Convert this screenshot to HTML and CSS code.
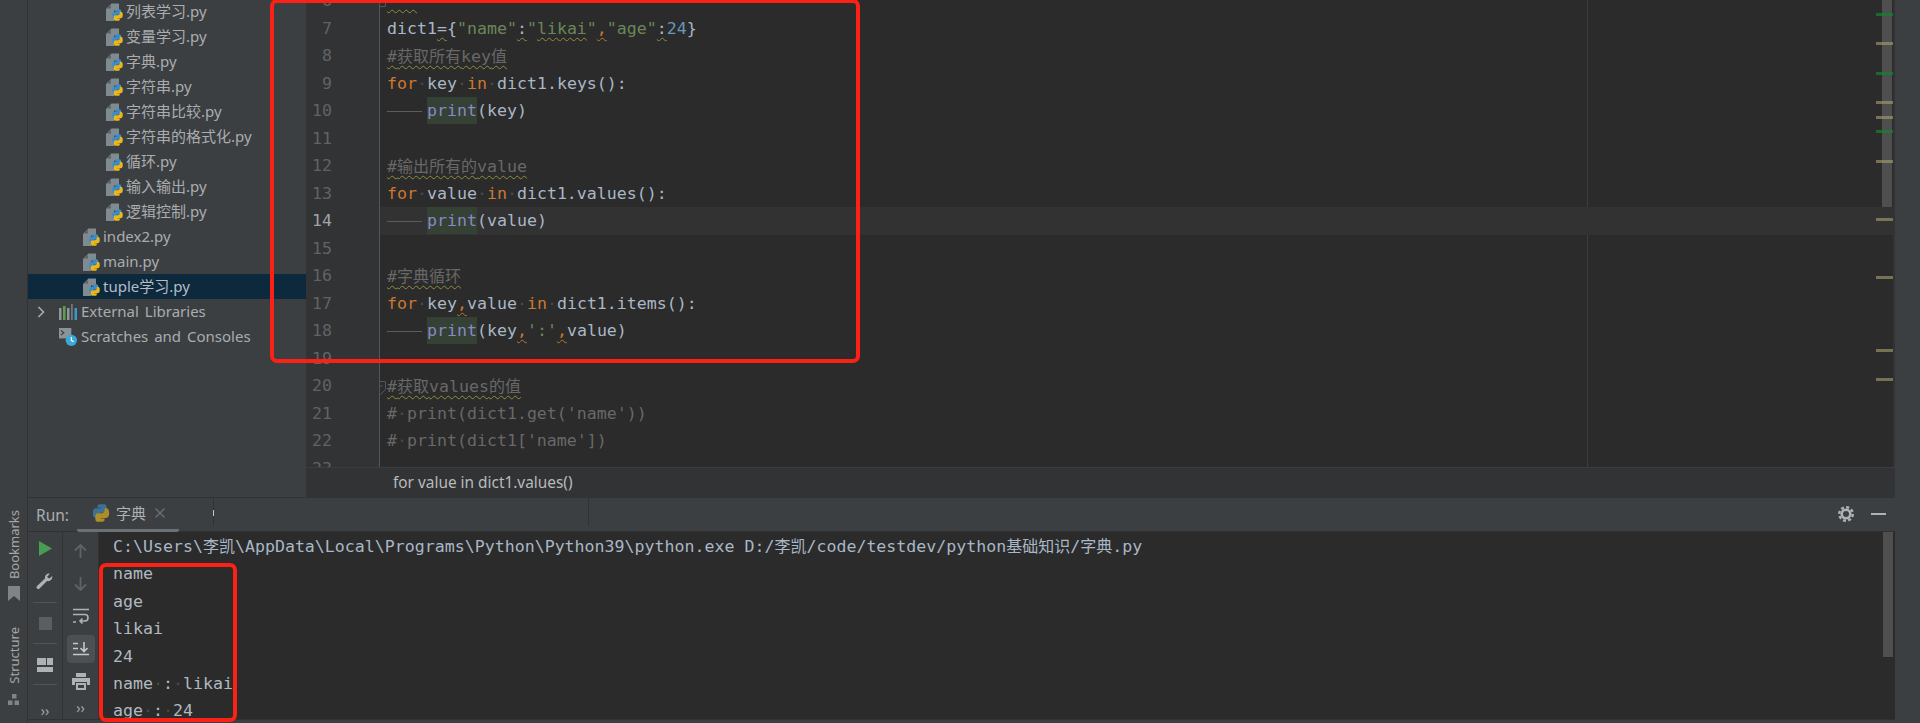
FILE: index.html
```html
<!DOCTYPE html>
<html lang="zh">
<head>
<meta charset="utf-8">
<title>字典.py</title>
<link rel="stylesheet" href="styles.css">
</head>
<body>
<svg class="defs" width="0" height="0" aria-hidden="true">
  <defs>
    <symbol id="py" viewBox="0 0 16 16">
      <path fill="#3c8cc7" d="M7.9 1C5 1 5.2 2.3 5.2 2.3V3.7h2.8v.4H4C2.7 4.1 1.5 4.9 1.5 8c0 3.1 1.1 3.9 2.3 3.9h1.3v-1.6c0-1.4 1.2-2.5 2.6-2.5h2.8c1.1 0 2-.9 2-2V2.9C12.5 1.9 11.6 1 10.4 1z"/>
      <path fill="#eab71c" transform="rotate(180 8 8)" d="M7.9 1C5 1 5.2 2.3 5.2 2.3V3.7h2.8v.4H4C2.7 4.1 1.5 4.9 1.5 8c0 3.1 1.1 3.9 2.3 3.9h1.3v-1.6c0-1.4 1.2-2.5 2.6-2.5h2.8c1.1 0 2-.9 2-2V2.9C12.5 1.9 11.6 1 10.4 1z"/>
    </symbol>
    <symbol id="pyfile" viewBox="0 0 18 18">
      <path fill="#7f8b91" d="M0 6 5.500 .5H13v7H8V18H0z"/>
      <path fill="#3c3f41" d="M4.800 2v3.500H1.300z" opacity=".6"/>
      <use href="#py" x="5" y="5.500" width="13" height="13"/>
    </symbol>
  </defs>
</svg>
<div class="app">
  <aside class="strip">
    <div class="vtext bookmarks">Bookmarks</div>
    <svg class="strip-icon" width="12" height="15" viewBox="0 0 12 15"><path fill="#7e8487" d="M0 0h12v15L6 10 0 15z"/></svg>
    <div class="vtext structure">Structure</div>
    <svg class="strip-icon strip-icon-b" width="12" height="12" viewBox="0 0 12 12"><path fill="#7e8487" d="M4 0h4.500v4.500H4zM0 6.500h4.500V11H0zM6.500 6.500H11V11H6.500z"/></svg>
  </aside>
  <main class="main">
    <section class="upper">
      <nav class="tree">
        <div class="row l3"><svg class="ficon"><use href="#pyfile"/></svg>列表学习.py</div>
        <div class="row l3"><svg class="ficon"><use href="#pyfile"/></svg>变量学习.py</div>
        <div class="row l3"><svg class="ficon"><use href="#pyfile"/></svg>字典.py</div>
        <div class="row l3"><svg class="ficon"><use href="#pyfile"/></svg>字符串.py</div>
        <div class="row l3"><svg class="ficon"><use href="#pyfile"/></svg>字符串比较.py</div>
        <div class="row l3"><svg class="ficon"><use href="#pyfile"/></svg>字符串的格式化.py</div>
        <div class="row l3"><svg class="ficon"><use href="#pyfile"/></svg>循环.py</div>
        <div class="row l3"><svg class="ficon"><use href="#pyfile"/></svg>输入输出.py</div>
        <div class="row l3"><svg class="ficon"><use href="#pyfile"/></svg>逻辑控制.py</div>
        <div class="row l2"><svg class="ficon"><use href="#pyfile"/></svg>index2.py</div>
        <div class="row l2"><svg class="ficon"><use href="#pyfile"/></svg>main.py</div>
        <div class="row l2 selected"><svg class="ficon"><use href="#pyfile"/></svg>tuple学习.py</div>
        <div class="row l1">
          <svg class="chev" width="9" height="12" viewBox="0 0 9 12"><path fill="none" stroke="#a9adb0" stroke-width="1.600" d="M1.500 1l5 5-5 5"/></svg>
          <svg class="ficon lib" viewBox="0 0 18 18"><path fill="#8f979b" d="M0 5h2.500v12H0zM8 5h2.500v12H8z"/><path fill="#5f9e4d" d="M4 3h2.500v14H4z"/><path fill="#6f787c" d="M12 1h1.800v16H12z"/><path fill="#3e97c9" d="M15.500 5H18v12h-2.500z"/></svg>External Libraries
        </div>
        <div class="row l1">
          <svg class="ficon lib" viewBox="0 0 19 19"><path fill="#8b9398" d="M0 0h13v11H0z"/><path fill="none" stroke="#3c3f41" stroke-width="1.300" d="M2 2.500 5 5 2 7.500"/><circle cx="13" cy="13" r="6" fill="#3aa9d8"/><path fill="none" stroke="#fff" stroke-width="1.200" d="M13 9.500V13l2.500 1.500"/></svg>Scratches and Consoles
        </div>
      </nav>
      <section class="editor">
        <div class="editor-view">
          <div class="gutter">
            <div class="ln">6</div><div class="ln">7</div><div class="ln">8</div><div class="ln">9</div><div class="ln">10</div><div class="ln">11</div><div class="ln">12</div><div class="ln">13</div><div class="ln now">14</div><div class="ln">15</div><div class="ln">16</div><div class="ln">17</div><div class="ln">18</div><div class="ln">19</div><div class="ln">20</div><div class="ln">21</div><div class="ln">22</div><div class="ln">23</div>
          </div>
          <div class="code">
            <div class="margin-line"></div>
            <svg class="fold fold-a" width="11" height="7" viewBox="0 0 11 7"><path fill="none" stroke="#55585a" d="M.500 0v6.500h10V0"/></svg>
            <svg class="fold fold-b" width="11" height="15" viewBox="0 0 11 15"><path fill="#2b2b2b" stroke="#55585a" d="M.500.500h10v8l-5 5-5-5z"/><path stroke="#55585a" d="M3 5h5"/></svg>
            <div class="cl"><span class="sq quote-top">'''</span></div>
            <div class="cl">dict1<span class="sq">=</span>{<span class="str">"name"</span><span class="sq">:</span><span class="str">"<span class="sq">likai</span>"</span><span class="sq ko">,</span><span class="str">"age"</span><span class="sq">:</span><span class="num">24</span>}</div>
            <div class="cl"><span class="sq com">#<span class="cjk">获取所有</span>key<span class="cjk">值</span></span></div>
            <div class="cl"><span class="kw">for</span><span class="ws">·</span>key<span class="ws">·</span><span class="kw">in</span><span class="ws">·</span>dict1.keys():</div>
            <div class="cl"><span class="tab"></span><span class="pr">print</span>(key)</div>
            <div class="cl"></div>
            <div class="cl"><span class="sq com">#<span class="cjk">输出所有的</span>value</span></div>
            <div class="cl"><span class="kw">for</span><span class="ws">·</span>value<span class="ws">·</span><span class="kw">in</span><span class="ws">·</span>dict1.values():</div>
            <div class="cl current"><span class="tab"></span><span class="pr">print</span>(value)</div>
            <div class="cl"></div>
            <div class="cl"><span class="sq com">#<span class="cjk">字典循环</span></span></div>
            <div class="cl"><span class="kw">for</span><span class="ws">·</span>key<span class="sq ko">,</span>value<span class="ws">·</span><span class="kw">in</span><span class="ws">·</span>dict1.items():</div>
            <div class="cl"><span class="tab"></span><span class="pr">print</span>(key<span class="sq ko">,</span><span class="str">':'</span><span class="sq ko">,</span>value)</div>
            <div class="cl"></div>
            <div class="cl"><span class="sq com">#<span class="cjk">获取</span>values<span class="cjk">的值</span></span></div>
            <div class="cl com">#<span class="ws">·</span>print(dict1.get('name'))</div>
            <div class="cl com">#<span class="ws">·</span>print(dict1['name'])</div>
            <div class="thumb"></div>
            <i class="mark green" style="top:13px"></i><i class="mark" style="top:42px"></i><i class="mark green" style="top:72px"></i><i class="mark" style="top:101px"></i><i class="mark" style="top:116px"></i><i class="mark green" style="top:130px"></i><i class="mark" style="top:160px"></i><i class="mark" style="top:218px"></i><i class="mark" style="top:276px"></i><i class="mark" style="top:349px"></i><i class="mark" style="top:378px"></i>
          </div>
        </div>
        <div class="crumb">for value in dict1.values()</div>
      </section>
    </section>
    <section class="lower">
      <header class="runbar">
        <span class="runlabel">Run:</span>
        <div class="tab-item">
          <svg class="tab-py" width="20" height="20"><use href="#py"/></svg>
          <span>字典</span>
          <svg class="tab-x" width="10" height="10" viewBox="0 0 10 10"><path stroke="#6e7275" stroke-width="1.200" d="M.500.500l9 9M9.500.500l-9 9"/></svg>
        </div>
        <span class="sep first"></span>
        <span class="sep second"></span>
        <svg class="gear" width="16" height="16" viewBox="0 0 16 16"><circle cx="8" cy="8" r="4.300" fill="none" stroke="#afb1b3" stroke-width="2.600"/><circle cx="8" cy="8" r="6.800" fill="none" stroke="#afb1b3" stroke-width="2.400" stroke-dasharray="3 2.340"/></svg>
        <span class="minimize"></span>
      </header>
      <div class="runbody">
        <div class="tools one">
          <div class="btn"><svg width="13" height="15" viewBox="0 0 13 15"><path fill="#499c54" d="M0 0l13 7.500L0 15z"/></svg></div>
          <div class="btn"><svg width="18" height="18" viewBox="0 0 18 18"><path fill="#afb1b3" d="M13 .5c-2.600 0-4.600 2.300-4 5L1 13c-1.500 1.500.7 4 2.300 2.700L11 8c2.800.7 5.800-1.400 5.300-5l-3 2.600L11 4l2.800-3.300c-.3-.1-.5-.2-.8-.2z"/></svg></div>
          <hr class="rule">
          <div class="btn"><span class="stop"></span></div>
          <hr class="rule">
          <div class="btn"><svg width="16" height="14" viewBox="0 0 16 14"><path fill="#afb1b3" d="M0 0h9v7H0zM10 0h6v7h-6zM0 9h16v5H0z"/></svg></div>
          <hr class="rule">
          <div class="more more-a">››</div>
        </div>
        <div class="tools two">
          <div class="btn dimmed"><svg width="13" height="14" viewBox="0 0 13 14"><path fill="none" stroke="#5f6366" stroke-width="1.800" d="M6.500 14V1M1 6.500l5.500-5.500 5.500 5.500"/></svg></div>
          <div class="btn dimmed"><svg width="13" height="14" viewBox="0 0 13 14"><path fill="none" stroke="#5f6366" stroke-width="1.800" d="M6.500 0v13M1 7.500 6.500 13 12 7.500"/></svg></div>
          <div class="btn"><svg width="16" height="16" viewBox="0 0 16 16"><path fill="none" stroke="#afb1b3" stroke-width="1.600" d="M0 1.500h16M0 6.500h12c4 0 4 6.500 0 6.500H7M9.500 10.500 7 13l2.500 2.500M0 14h3"/></svg></div>
          <div class="btn"><span class="btn-on"><svg width="16" height="14" viewBox="0 0 16 14"><path fill="none" stroke="#c4c6c8" stroke-width="1.600" d="M0 1.500h5M0 6.500h5M0 12.500h16M11 0v9M7.500 6 11 9.500 14.500 6"/></svg></span></div>
          <div class="btn"><svg width="18" height="17" viewBox="0 0 18 17"><path fill="#afb1b3" d="M4 0h10v4H4zM0 5h18v7h-3V9H3v3H0zM4 10h10v7H4z"/><path fill="#3c3f41" d="M6 12h6v3H6z"/></svg></div>
          <div class="more">››</div>
        </div>
        <div class="console">
          <div class="out cmd">C:\Users\<span class="cjk">李凯</span>\AppData\Local\Programs\Python\Python39\python.exe D:/<span class="cjk">李凯</span>/code/testdev/python<span class="cjk">基础知识</span>/<span class="cjk">字典</span>.py</div>
          <div class="out">name</div>
          <div class="out">age</div>
          <div class="out">likai</div>
          <div class="out">24</div>
          <div class="out">name<span class="ws">·</span>:<span class="ws">·</span>likai</div>
          <div class="out">age<span class="ws">·</span>:<span class="ws">·</span>24</div>
          <div class="thumb console-thumb"></div>
        </div>
      </div>
      <div class="statusline"></div>
    </section>
  </main>
  <aside class="strip-right"></aside>
  <div class="callout callout-code"></div>
  <div class="callout callout-run"></div>
</div>
</body>
</html>
```

FILE: styles.css
```css
* { box-sizing: border-box; }
html, body { margin: 0; padding: 0; }
body {
  width: 1920px;
  height: 723px;
  overflow: hidden;
  background: #3c3f41;
  font-family: "Noto Sans", "Noto Sans CJK SC", sans-serif;
  color: #afb1b3;
}
.defs { position: absolute; }
.app { position: relative; display: flex; width: 1920px; height: 723px; overflow: hidden; }

/* left strip */
.strip {
  width: 28px;
  flex: none;
  border-right: 1px solid #323232;
  display: flex;
  flex-direction: column;
  align-items: center;
  padding-top: 510px;
}
.vtext {
  writing-mode: vertical-rl;
  transform: rotate(180deg);
  font-size: 13px;
  line-height: 14px;
  color: #a4a7a9;
}
.strip-icon { margin-top: 7px; flex: none; }
.structure { margin-top: 26px; }
.strip-icon-b { margin-top: 10px; }

.main { width: 1867px; flex: none; display: flex; flex-direction: column; }
.upper { display: flex; height: 497px; flex: none; }

/* project tree */
.tree { width: 278px; flex: none; margin-top: -1px; font-size: 15px; word-spacing: 2px; overflow: hidden; }
.row { display: flex; align-items: center; height: 25px; padding-bottom: 2px; white-space: nowrap; color: #a9adb0; }
.l3 { padding-left: 78px; }
.l2 { padding-left: 55px; }
.l1 { padding-left: 9px; }
.selected { background: #0d293e; color: #b4bcc4; }
.ficon { width: 18px; height: 18px; flex: none; margin-right: 2px; margin-top: 2px; }
.lib { margin-right: 4px; margin-left: 22px; }
.chev { flex: none; margin-right: -9px; margin-top: 2px; }
.chev + .lib { margin-left: 22px; }

/* editor */
.editor { width: 1589px; flex: none; display: flex; flex-direction: column; }
.editor-view { height: 467px; flex: none; display: flex; overflow: hidden; }
.gutter {
  width: 74px;
  flex: none;
  background: #313335;
  border-right: 1px solid #555;
}
.ln {
  position: relative;
  top: -13px;
  height: 27.5px;
  text-align: right;
  padding-right: 47px;
  font: 16.6px/27.5px "DejaVu Sans Mono", monospace;
  color: #606366;
}
.ln.now { color: #a4a3a3; }
.code {
  position: relative;
  width: 1515px;
  flex: none;
  background: #2b2b2b;
  border-right: 2px solid #313335;
  font: 16.6px/27.5px "DejaVu Sans Mono", "Noto Sans CJK SC", monospace;
  color: #a9b7c6;
  overflow: hidden;
}
.cl { position: relative; top: -13px; height: 27.5px; padding-left: 7px; white-space: pre; }
.current { background: #323232; }
.cjk { font-family: "Noto Sans CJK SC", sans-serif; font-size: 16px; }
.kw { color: #cc7832; }
.str { color: #6a8759; }
.num { color: #6897bb; }
.com { color: #686868; }
.ws { color: #4a4a4a; }
.quote-top { color: #30322f; }
.sq { text-decoration: underline wavy #8f8f3e 1px; text-underline-offset: 3px; text-decoration-skip-ink: none; }
.ko { color: #cc7832; text-decoration-color: #b5762f; }
.pr { display: inline-block; height: 27px; line-height: 27px; vertical-align: top; background: #344134; color: #8888c6; }
.tab { display: inline-block; width: 35px; height: 1px; margin-right: 5px; vertical-align: middle; background: #5c5c5c; }
.margin-line { position: absolute; left: 1207px; top: 0; bottom: 0; width: 1px; background: #3c3c3c; }
.fold { position: absolute; left: -5px; z-index: 2; }
.fold-a { top: 0; }
.fold-b { top: 381px; }
.thumb { position: absolute; right: 1px; top: 0; width: 10px; height: 207px; background: #4f4f4f; z-index: 1; }
.mark { position: absolute; right: 0; width: 17px; height: 3px; background: rgba(168, 156, 110, .62); z-index: 2; }
.mark.green { background: rgba(16, 130, 46, .72); }
.crumb {
  height: 30px;
  flex: none;
  background: #313335;
  border-top: 1px solid #3b3d3e;
  padding-left: 87px;
  font-size: 15.4px;
  line-height: 29px;
  color: #b8bbbd;
}

/* run panel */
.lower { height: 226px; flex: none; display: flex; flex-direction: column; border-top: 1px solid #323232; }
.runbar {
  height: 34px;
  flex: none;
  display: flex;
  align-items: flex-start;
  border-bottom: 1px solid #323232;
  padding-left: 8px;
  padding-right: 9px;
  font-size: 15px;
}
.runlabel { width: 41px; line-height: 35px; font-size: 15.5px; color: #a9adb0; }
.tab-item {
  width: 102px;
  height: 34px;
  flex: none;
  display: flex;
  align-items: center;
  padding: 0 0 2px 14px;
  border-bottom: 3px solid #6b7074;
  border-radius: 2px;
}
.tab-py { margin-right: 5px; opacity: .65; flex: none; }
.tab-x { margin-left: 9px; flex: none; }
.sep { width: 1px; height: 28px; background: #323232; flex: none; }
.sep.first { margin-left: 34px; background: linear-gradient(#323232 0 12px, #c8c8c8 12px 18px, #323232 18px); }
.sep.second { margin-left: 374px; }
.gear { margin-left: auto; margin-top: 8px; flex: none; }
.minimize { width: 15px; height: 2px; margin: 15px 0 0 17px; background: #afb1b3; flex: none; }
.runbody { height: 187px; flex: none; display: flex; }
.tools { width: 36px; flex: none; display: flex; flex-direction: column; align-items: center; border-right: 1px solid #323232; }
.one { width: 35px; }
.two { padding-top: 3px; background: #3c3f41; }
.btn { height: 33px; width: 100%; flex: none; display: flex; align-items: center; justify-content: center; }
.two .btn { height: 32.5px; }
.rule { width: 24px; height: 1px; border: 0; margin: 4px 0; background: #515456; flex: none; }
.rule + .btn + .rule { margin-top: 3px; }
.stop { width: 13px; height: 13px; background: #5b5e60; }
.btn-on { width: 28px; height: 28px; display: flex; align-items: center; justify-content: center; border-radius: 4px; background: #4c5052; }
.more { height: 22px; font-size: 14px; line-height: 20px; color: #a4a7a9; flex: none; }
.more-a { margin-top: 12px; }
.console {
  position: relative;
  flex: 1;
  background: #2b2b2b;
  padding-left: 14px;
  font: 16.6px/27.4px "DejaVu Sans Mono", "Noto Sans CJK SC", monospace;
  color: #a9b7c6;
  overflow: hidden;
}
.out { height: 27.4px; white-space: pre; color: #b0b9c0; }
.cmd { height: 28.4px; color: #a9b7c6; }
.console-thumb { right: 2px; height: 125px; }
.statusline { flex: 1; border-top: 1px solid #323232; }
.strip-right { width: 25px; flex: none; background: #3c3f41; }

/* hand-drawn annotation boxes lying over the screenshot */
.callout { position: absolute; border: 4px solid #fb2114; border-radius: 7px; z-index: 5; }
.callout-code { left: 270px; top: -1px; width: 590px; height: 364px; }
.callout-run { left: 99px; top: 563px; width: 138px; height: 159px; }
```
